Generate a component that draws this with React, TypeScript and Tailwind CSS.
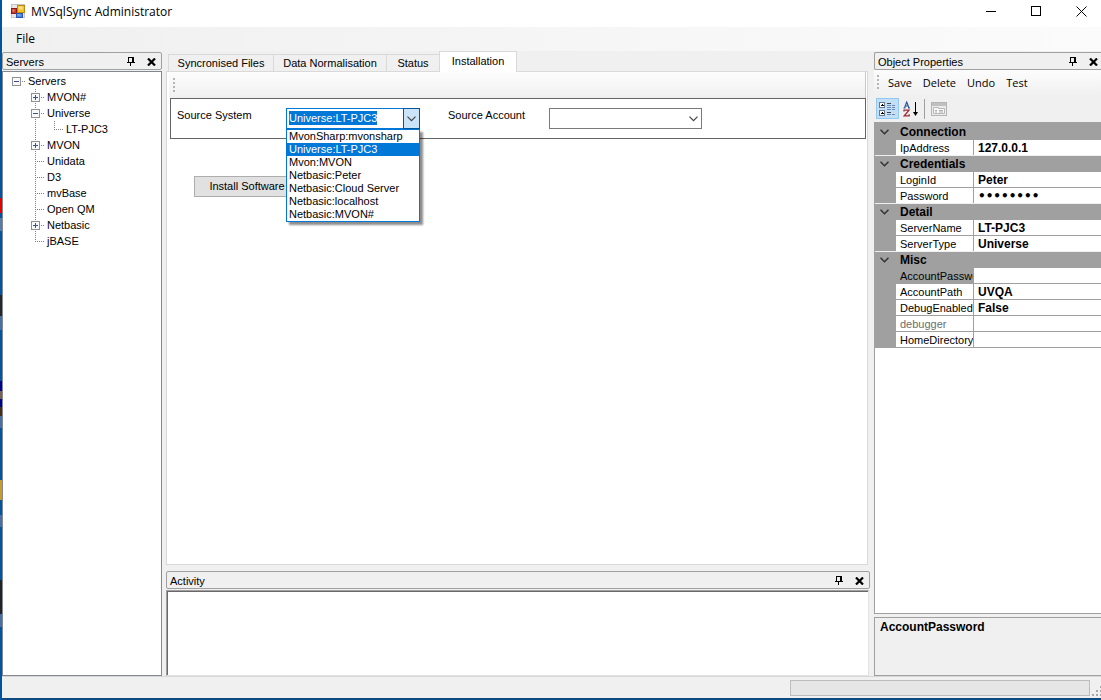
import React, { useEffect, useRef, useState } from "react";

type TreeCell = "blank" | "line" | "tee" | "end" | "plus" | "minus" | "root";

const TREE: { label: string; level: number; cells: TreeCell[] }[] = [
  { label: "Servers", level: 1, cells: ["root"] },
  { label: "MVON#", level: 2, cells: ["blank", "plus"] },
  { label: "Universe", level: 2, cells: ["blank", "minus"] },
  { label: "LT-PJC3", level: 3, cells: ["blank", "line", "end"] },
  { label: "MVON", level: 2, cells: ["blank", "plus"] },
  { label: "Unidata", level: 2, cells: ["blank", "tee"] },
  { label: "D3", level: 2, cells: ["blank", "tee"] },
  { label: "mvBase", level: 2, cells: ["blank", "tee"] },
  { label: "Open QM", level: 2, cells: ["blank", "tee"] },
  { label: "Netbasic", level: 2, cells: ["blank", "plus"] },
  { label: "jBASE", level: 2, cells: ["blank", "end"] },
];

const TABS = [
  { label: "Syncronised Files", width: "w-[105px]" },
  { label: "Data Normalisation", width: "w-[113px]" },
  { label: "Status", width: "w-[53px]" },
  { label: "Installation", width: "w-[78px]" },
];

const SYSTEMS = [
  "MvonSharp:mvonsharp",
  "Universe:LT-PJC3",
  "Mvon:MVON",
  "Netbasic:Peter",
  "Netbasic:Cloud Server",
  "Netbasic:localhost",
  "Netbasic:MVON#",
];

const PROPERTIES = [
  { group: "Connection", items: [{ name: "IpAddress", value: "127.0.0.1" }] },
  {
    group: "Credentials",
    items: [
      { name: "LoginId", value: "Peter" },
      { name: "Password", value: "password" },
    ],
  },
  {
    group: "Detail",
    items: [
      { name: "ServerName", value: "LT-PJC3" },
      { name: "ServerType", value: "Universe" },
    ],
  },
  {
    group: "Misc",
    items: [
      { name: "AccountPassword", value: "" },
      { name: "AccountPath", value: "UVQA" },
      { name: "DebugEnabled", value: "False" },
      { name: "debugger", value: "" },
      { name: "HomeDirectory", value: "" },
    ],
  },
];

// Sliver of the desktop that shows to the left of the window
const DESKTOP = [
  { height: 198, color: "bg-[#0055a0]" },
  { height: 15, color: "bg-[#e80000]" },
  { height: 5, color: "bg-[#0055a0]" },
  { height: 13, color: "bg-[#5a7ba8]" },
  { height: 64, color: "bg-[#0055a0]" },
  { height: 21, color: "bg-[#262626]" },
  { height: 14, color: "bg-[#4870a4]" },
  { height: 51, color: "bg-[#0055a0]" },
  { height: 10, color: "bg-[#000090]" },
  { height: 8, color: "bg-[#7a6250]" },
  { height: 8, color: "bg-[#000090]" },
  { height: 9, color: "bg-[#4a2c14]" },
  { height: 12, color: "bg-[#4870a4]" },
  { height: 52, color: "bg-[#0055a0]" },
  { height: 20, color: "bg-[#c89c28]" },
  { height: 15, color: "bg-[#0055a0]" },
  { height: 12, color: "bg-[#4870a4]" },
  { height: 53, color: "bg-[#0055a0]" },
  { height: 34, color: "bg-[#222222]" },
  { height: 13, color: "bg-[#4870a4]" },
];

function AppIcon() {
  return (
    <svg width="14" height="14" viewBox="0 0 14 14" aria-hidden="true">
      <rect x="0.5" y="0.5" width="13" height="13" fill="#e8e8e8" stroke="#c4c4c4" />
      <rect x="0.5" y="4.5" width="5" height="5" fill="#c63a2c" stroke="#8e1a14" />
      <rect x="1.5" y="5.5" width="2" height="2" fill="#ec8a78" />
      <rect x="6.5" y="1.5" width="7" height="7" fill="#f6c02c" stroke="#c08a10" />
      <rect x="7.5" y="2.5" width="4" height="3" fill="#fbe08a" />
      <rect x="5.5" y="9.5" width="6" height="4" fill="#4c84dc" stroke="#2a58b4" />
      <rect x="6.5" y="10.5" width="3" height="1" fill="#9cc0f4" />
    </svg>
  );
}

function Chevron() {
  return (
    <svg width="9" height="6" viewBox="0 0 9 6" fill="none" aria-hidden="true">
      <path d="M0.5 0.7L4.5 4.7L8.5 0.7" stroke="#444" strokeWidth="1.2" />
    </svg>
  );
}

function TreeGlyph({ kind }: { kind: TreeCell }) {
  const box = kind === "plus" || kind === "minus" || kind === "root";
  const up = kind !== "blank" && kind !== "root";
  const down = up && kind !== "end";
  return (
    <svg width="19" height="16" viewBox="0 0 19 16" className="shrink-0" aria-hidden="true">
      <g stroke="#808080" strokeDasharray="1 1" shapeRendering="crispEdges">
        {up && <path d="M9.5 0V8" />}
        {down && <path d="M9.5 8V16" />}
        {kind !== "blank" && kind !== "line" && <path d="M9 8.5H18" />}
      </g>
      {box && (
        <g shapeRendering="crispEdges">
          <rect x="5.5" y="4.5" width="8" height="8" fill="#f8f8f8" stroke="#919191" />
          <path d="M7 8.5H12" stroke="#3a4f9c" />
          {kind === "plus" && <path d="M9.5 6V11" stroke="#3a4f9c" />}
        </g>
      )}
    </svg>
  );
}

function PanelHeader({ title, openEnd = false }: { title: string; openEnd?: boolean }) {
  return (
    <div
      className={
        openEnd
          ? "flex h-[18px] shrink-0 items-center rounded-l-[2px] border border-r-0 border-[#a0a0a0] bg-[#f0f0f0] pt-px pr-[3px] pl-[3px]"
          : "flex h-[18px] shrink-0 items-center rounded-[2px] border border-[#a0a0a0] bg-[#f0f0f0] pt-px pr-[5px] pl-[3px]"
      }
    >
      <h2 className="flex-1 pt-px leading-4">{title}</h2>
      <button aria-label={`Auto hide ${title}`} className="mr-3">
        <svg width="8" height="10" viewBox="0 0 8 10" shapeRendering="crispEdges">
          <path d="M1 0H7V1H1ZM1 0H2V6H1ZM5 0H7V6H5ZM0 5H8V6H0ZM3 6H4V9H3Z" fill="#000" />
        </svg>
      </button>
      <button aria-label={`Close ${title}`}>
        <svg width="9" height="8" viewBox="0 0 9 8" fill="none">
          <path d="M1 0.5L8 7.5M8 0.5L1 7.5" stroke="#000" strokeWidth="2.2" />
        </svg>
      </button>
    </div>
  );
}

function Grip() {
  return (
    <svg width="2" height="15" viewBox="0 0 2 15" aria-hidden="true">
      <path d="M0 0H2V2H0ZM0 4H2V6H0ZM0 8H2V10H0ZM0 12H2V14H0Z" fill="#b4b4b4" />
    </svg>
  );
}

function SourceSystem() {
  const [value, setValue] = useState("Universe:LT-PJC3");
  const inputRef = useRef<HTMLInputElement>(null);

  useEffect(() => {
    inputRef.current?.focus();
    inputRef.current?.select();
  }, []);

  return (
    <div className="relative w-[134px]">
      <div className="flex h-[21px] border border-[#0078d7] bg-white">
        <input
          id="source-system"
          ref={inputRef}
          role="combobox"
          aria-expanded="true"
          aria-controls="source-system-list"
          value={value}
          onChange={(e) => setValue(e.target.value)}
          className="mt-[2px] ml-[2px] h-[14px] min-w-0 flex-1 leading-[14px] outline-none selection:bg-[#0078d7] selection:text-white"
        />
        <button
          aria-label="Show systems"
          className="-my-px -mr-px flex w-[17px] items-center justify-center border border-[#005499] bg-[#cce4f7]"
        >
          <Chevron />
        </button>
      </div>
      <ul
        id="source-system-list"
        role="listbox"
        aria-label="Source System"
        className="absolute top-full left-0 z-10 w-full border border-[#0078d7] bg-white shadow-[3px_3px_2px_rgba(0,0,0,0.45)]"
      >
        {SYSTEMS.map((system) => (
          <li
            key={system}
            role="option"
            aria-selected={system === value}
            onClick={() => setValue(system)}
            className={
              system === value
                ? "h-[13px] bg-[#0078d7] pl-[2px] leading-[13px] text-white"
                : "h-[13px] pl-[2px] leading-[13px]"
            }
          >
            {system}
          </li>
        ))}
      </ul>
    </div>
  );
}

function PropertyGrid() {
  return (
    <table className="w-full table-fixed border-collapse">
      <colgroup>
        <col className="w-[21px]" />
        <col className="w-[78px]" />
        <col />
      </colgroup>
      {PROPERTIES.map(({ group, items }) => (
        <tbody key={group}>
          <tr className="h-4 bg-[#a0a0a0]">
            <td className="p-0">
              <button aria-label={`Collapse ${group}`} className="flex h-4 w-[19px] items-center justify-center">
                <svg width="9" height="6" viewBox="0 0 9 6" fill="none">
                  <path d="M0.5 0.7L4.5 4.7L8.5 0.7" stroke="#333" strokeWidth="1.5" />
                </svg>
              </button>
            </td>
            <th colSpan={2} className="p-0 pl-1 text-left text-xs leading-4 font-bold">
              {group}
            </th>
          </tr>
          {items.map(({ name, value }, i) => {
            const beforeGroup = i === items.length - 1 && group !== "Misc";
            return (
              <tr key={name} className="h-4">
                <td
                  className={
                    beforeGroup ? "bg-[#a0a0a0] p-0 shadow-[inset_0_-1px_#f0f0f0]" : "bg-[#a0a0a0] p-0"
                  }
                />
                <td
                  className={
                    name === "AccountPassword"
                      ? "overflow-hidden bg-[#a0a0a0] p-0 pl-1"
                      : beforeGroup
                        ? "overflow-hidden p-0 pl-1 shadow-[inset_0_-1px_#f0f0f0,inset_-1px_0_#a0a0a0]"
                        : "overflow-hidden p-0 pl-1 shadow-[inset_-1px_-1px_#a0a0a0]"
                  }
                >
                  <label
                    htmlFor={`prop-${name}`}
                    className={
                      name === "debugger"
                        ? "mr-px block h-4 overflow-hidden leading-4 text-[#6d6d6d]"
                        : "mr-px block h-4 overflow-hidden leading-4"
                    }
                  >
                    {name}
                  </label>
                </td>
                <td
                  className={
                    beforeGroup ? "p-0 shadow-[inset_0_-1px_#f0f0f0]" : "p-0 shadow-[inset_0_-1px_#a0a0a0]"
                  }
                >
                  <input
                    id={`prop-${name}`}
                    type={name === "Password" ? "password" : "text"}
                    defaultValue={value}
                    className={
                      name === "Password"
                        ? "block h-[15px] w-full bg-transparent pl-1 font-['DejaVu_Sans',sans-serif] text-xs leading-[15px] font-bold outline-none"
                        : "block h-[15px] w-full bg-transparent pl-1 text-xs leading-[15px] font-bold outline-none"
                    }
                  />
                </td>
              </tr>
            );
          })}
        </tbody>
      ))}
    </table>
  );
}

export default function App() {
  const [activeTab, setActiveTab] = useState("Installation");

  return (
    <div className="flex h-screen overflow-hidden bg-[#0f4a7c] font-['Liberation_Sans',sans-serif] text-[11px] text-black">
      <div className="flex w-[2px] shrink-0 flex-col bg-[#0055a0]" aria-hidden="true">
        {DESKTOP.map(({ height, color }, i) => (
          <div key={i} className={color} style={{ height }} />
        ))}
      </div>

      <div className="mb-[2px] flex min-w-0 flex-1 flex-col bg-[#f0f0f0]">
        {/* Title bar */}
        <header className="flex h-[27px] shrink-0 items-start bg-white pt-1 pl-[9px] font-['Open_Sans',sans-serif]">
          <AppIcon />
          <h1 className="ml-[6px] flex-1 text-xs leading-4">MVSqlSync Administrator</h1>
          <div className="flex h-[15px] items-center gap-[34px] pr-[14px]">
            <button aria-label="Minimize">
              <svg width="11" height="11" viewBox="0 0 11 11" shapeRendering="crispEdges">
                <path d="M0 5.5H10" stroke="#000" />
              </svg>
            </button>
            <button aria-label="Maximize">
              <svg width="11" height="11" viewBox="0 0 11 11" fill="none" shapeRendering="crispEdges">
                <rect x="0.5" y="0.5" width="9" height="9" stroke="#000" />
              </svg>
            </button>
            <button aria-label="Close">
              <svg width="11" height="11" viewBox="0 0 11 11" fill="none">
                <path d="M0.5 0.5L10.5 10.5M10.5 0.5L0.5 10.5" stroke="#000" />
              </svg>
            </button>
          </div>
        </header>

        <nav className="flex h-6 shrink-0 items-center bg-linear-to-r from-[#f0f0f0] to-[#fbfbfb] pl-[14px] font-['Open_Sans',sans-serif] text-xs">
          <button>File</button>
        </nav>

        <main className="flex min-h-0 flex-1 gap-1">
          {/* Servers */}
          <section className="flex w-[160px] shrink-0 flex-col gap-px pt-px">
            <PanelHeader title="Servers" />
            <ul role="tree" aria-label="Servers" className="flex-1 border border-[#828790] bg-white pt-px pl-1">
              {TREE.map(({ label, level, cells }) => (
                <li key={label} role="treeitem" aria-level={level} className="flex h-4">
                  {cells.map((kind, i) => (
                    <TreeGlyph key={i} kind={kind} />
                  ))}
                  <span className="pl-[2px] leading-4">{label}</span>
                </li>
              ))}
            </ul>
          </section>

          {/* Work area */}
          <section className="flex min-w-0 flex-1 flex-col">
            <div role="tablist" className="z-10 -mb-px flex h-[21px] shrink-0 items-end pl-[2px]">
              {TABS.map(({ label, width }) => (
                <button
                  key={label}
                  role="tab"
                  aria-selected={label === activeTab}
                  onClick={() => setActiveTab(label)}
                  className={`${width} ${
                    label === activeTab
                      ? "h-[21px] border border-b-0 border-[#d9d9d9] bg-white pb-[2px]"
                      : "h-[18px] border border-r-0 border-[#d9d9d9] bg-[#f0f0f0]"
                  }`}
                >
                  {label}
                </button>
              ))}
            </div>
            <div role="tabpanel" className="mr-[2px] flex-1 border border-[#d9d9d9] bg-white pr-px pl-[2px]">
              <div className="flex h-[26px] items-center border-r border-[#c8c8c8] bg-linear-to-b from-[#fdfdfd] to-[#f0f0f0] pl-1">
                <Grip />
              </div>
              <div className="ml-px flex h-[41px] items-start border border-[#646464] pt-[9px] pl-[6px]">
                <label htmlFor="source-system" className="w-[109px] leading-[14px]">
                  Source System
                </label>
                <SourceSystem />
                <label htmlFor="source-account" className="ml-7 w-[101px] leading-[14px]">
                  Source Account
                </label>
                <div className="relative h-[21px] w-[153px]">
                  <select
                    id="source-account"
                    className="h-full w-full appearance-none border border-[#7a7a7a] bg-white px-1 outline-none"
                  >
                    <option></option>
                  </select>
                  <span className="pointer-events-none absolute top-2 right-1">
                    <Chevron />
                  </span>
                </div>
              </div>
              <button className="mt-[37px] ml-[25px] h-[21px] w-[106px] border border-[#adadad] bg-[#e1e1e1]">
                Install Software
              </button>
            </div>

            <div className="mt-[6px] flex h-[105px] shrink-0 flex-col gap-px">
              <PanelHeader title="Activity" />
              <div className="mr-px flex-1 border border-t-[#a0a0a0] border-r-[#e3e3e3] border-b-[#e3e3e3] border-l-[#a0a0a0] bg-white shadow-[inset_1px_1px_#696969]" />
            </div>
          </section>

          {/* Object properties */}
          <section className="flex w-[227px] shrink-0 flex-col pt-px">
            <PanelHeader title="Object Properties" openEnd />
            <div className="flex h-[25px] shrink-0 items-center bg-linear-to-b from-[#fdfdfd] to-[#f0f0f0] pl-[3px] font-['Open_Sans',sans-serif]">
              <Grip />
              <div className="ml-[9px] flex gap-[11px] pt-[2px]">
                <button>Save</button>
                <button>Delete</button>
                <button>Undo</button>
                <button>Test</button>
              </div>
            </div>
            <div className="flex h-[27px] shrink-0 items-center pl-[2px]">
              <button
                aria-label="Categorized"
                className="flex h-[21px] w-[23px] items-center justify-center border border-[#90c8f6] bg-[#c2dff5]"
              >
                <svg width="17" height="16" viewBox="0 0 17 16" fill="none" shapeRendering="crispEdges">
                  <rect x="0.5" y="1.5" width="5" height="5" rx="1" fill="#fff" stroke="#6a7890" />
                  <path d="M2 4H5M3.5 3V5" stroke="#000" />
                  <rect x="0.5" y="9.5" width="5" height="5" rx="1" fill="#fff" stroke="#6a7890" />
                  <path d="M2 12H5M3.5 11V13" stroke="#000" />
                  <path d="M8 2.5H12M8 11.5H12" stroke="#444" />
                  <path d="M8 4.5H12M8 6.5H12M8 8.5H12M8 13.5H12M13 4.5H16M13 6.5H16M13 8.5H16M13 13.5H16" stroke="#6c8cb8" />
                </svg>
              </button>
              <button aria-label="Alphabetical" className="flex w-[23px] items-center justify-center">
                <svg width="16" height="16" viewBox="0 0 16 16" fill="none">
                  <path d="M0.5 7H2.5M5 7H7M1.5 7L3.7 1L6 7M2.3 5H5" stroke="#2f55a4" strokeWidth="1.2" />
                  <path d="M1 10.5V9.2H6L1.3 14.8H6.2V13.3" stroke="#9c2c36" strokeWidth="1.3" />
                  <path d="M12.5 1V12" stroke="#000" />
                  <path d="M10 11H15L12.5 15Z" fill="#000" />
                </svg>
              </button>
              <span className="ml-[2px] h-5 w-px bg-[#a0a0a0]" />
              <button aria-label="Property Pages" className="ml-[6px]">
                <svg width="16" height="16" viewBox="0 0 16 16" fill="none">
                  <rect x="0.5" y="1.5" width="15" height="13" fill="#ececec" stroke="#b4b4b4" />
                  <path d="M1 3.5H15" stroke="#c0c0c0" strokeWidth="3" />
                  <path d="M2.5 12.5V6.5H7.5V7.5H13.5V12.5Z" fill="#f8f8f8" stroke="#b8b8b8" />
                  <path d="M4 9.5H6M8 9.5H12M4 11H6M8 11H12" stroke="#b0b0b0" />
                </svg>
              </button>
            </div>
            <div className="flex-1 border-t-2 border-b border-l border-[#a0a0a0] bg-white">
              <PropertyGrid />
            </div>
            <div className="mt-[3px] h-[59px] shrink-0 border-y border-l border-[#a0a0a0] px-[5px] pt-px text-xs leading-4 font-bold">
              AccountPassword
            </div>
          </section>
        </main>

        <footer className="flex h-[22px] shrink-0 items-center justify-end border-t border-[#d7d7d7]">
          <div
            role="progressbar"
            aria-label="Progress"
            aria-valuenow={0}
            className="h-4 w-[300px] border border-[#bcbcbc] bg-[#e6e6e6]"
          />
          <svg width="11" height="16" viewBox="0 0 11 16" className="self-end" aria-hidden="true">
            <path d="M2 12H4V14H2ZM6 12H8V14H6ZM10 12H11V14H10ZM6 8H8V10H6ZM10 8H11V10H10ZM10 4H11V6H10Z" fill="#a8a8a8" />
          </svg>
        </footer>
      </div>
    </div>
  );
}
